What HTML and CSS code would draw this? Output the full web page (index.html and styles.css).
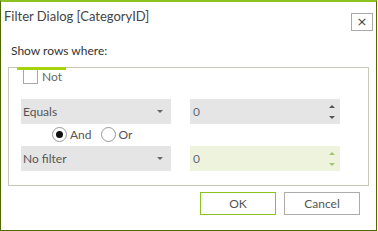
FILE: index.html
```html
<!DOCTYPE html>
<html lang="en">
<head>
  <meta charset="UTF-8">
  <title>Filter Dialog</title>
  <link rel="stylesheet" href="styles.css">
</head>
<body>
  <div class="dialog">
    <div class="titlebar">
      <span class="title">Filter Dialog [CategoryID]</span>
      <button type="button" class="close">&times;</button>
    </div>

    <div class="body">
      <div class="caption">Show rows where:</div>

      <div class="group">
        <span class="group-tab"></span>

        <!-- Not -->
        <label class="check"><span class="box"></span>Not</label>

        <!-- Filter 1 -->
        <div class="row">
          <div class="select">Equals<span class="arrow"></span></div>
          <div class="spin">0
            <span class="spin-btns"><i class="up"></i><i class="down"></i></span>
          </div>
        </div>

        <!-- And / Or -->
        <div class="logic">
          <label class="radio"><span class="dot checked"></span>And</label>
          <label class="radio"><span class="dot"></span>Or</label>
        </div>

        <!-- Filter 2 -->
        <div class="row">
          <div class="select">No filter<span class="arrow"></span></div>
          <div class="spin disabled">0
            <span class="spin-btns"><i class="up"></i><i class="down"></i></span>
          </div>
        </div>
      </div>

      <div class="actions">
        <button type="button" class="btn btn-ok">OK</button>
        <button type="button" class="btn">Cancel</button>
      </div>
    </div>
  </div>
</body>
</html>
```

FILE: styles.css
```css
* {
  box-sizing: border-box;
}

body {
  margin: 0;
  font-family: Lato, "Liberation Sans", Arial, sans-serif;
  font-size: 12px;
  color: #555;
  background-color: #fff;
}

.dialog {
  width: 377px;
  height: 231px;
  background-color: #fff;
  border: 1px solid #4d6b02;
  border-top: 2px solid #8cc21f;
}

.titlebar {
  display: flex;
  justify-content: space-between;
  align-items: flex-start;
  height: 34px;
}

.title {
  padding: 6px 0 0 3px;
  font-size: 13px;
  line-height: 16px;
  color: #444;
}

.close {
  width: 22px;
  height: 18px;
  margin: 11px 3px 0 0;
  padding: 0;
  border: 1px solid #a9a9a9;
  background-color: #fff;
  font-family: "DejaVu Sans", sans-serif;
  font-size: 13px;
  line-height: 14px;
  color: #444;
}

.body {
  padding: 0 7px;
}

.caption {
  margin-top: 7px;
  padding-left: 3px;
  line-height: 15px;
  color: #333;
}

.group {
  position: relative;
  height: 119px;
  margin-top: 9px;
  padding: 0 0 0 12px;
  border: 1px solid #c8c8b9;
}

.group-tab {
  position: absolute;
  left: 8px;
  top: -1px;
  width: 49px;
  height: 3px;
  background-color: #a5d40f;
}

.check {
  display: flex;
  align-items: center;
  height: 15px;
  margin: 1px 0 0 2px;
  color: #666;
}

.check .box {
  width: 15px;
  height: 15px;
  margin-right: 4px;
  border: 1px solid #a8a8a8;
  background-color: #fff;
}

.row {
  display: flex;
  margin-top: 15px;
}

.row + .logic + .row {
  margin-top: 4px;
}

.select,
.spin {
  display: flex;
  align-items: center;
  width: 150px;
  height: 25px;
  background-color: #e5e5e5;
}

.select {
  justify-content: space-between;
  padding: 0 8px 0 2px;
}

.arrow {
  border-left: 3px solid transparent;
  border-right: 3px solid transparent;
  border-top: 3px solid #666;
}

.spin {
  justify-content: space-between;
  margin-left: 19px;
  padding: 0 5px 0 3px;
  color: #5f6b7c;
}

.spin-btns {
  display: flex;
  flex-direction: column;
  gap: 8px;
}

.spin-btns i {
  display: block;
  border-left: 3px solid transparent;
  border-right: 3px solid transparent;
}

.spin-btns .up {
  border-bottom: 3px solid #555;
}

.spin-btns .down {
  border-top: 3px solid #555;
}

.spin.disabled {
  background-color: #eef3de;
}

.spin.disabled .up {
  border-bottom-color: #a8c46a;
}

.spin.disabled .down {
  border-top-color: #a8c46a;
}

.logic {
  display: flex;
  gap: 9px;
  height: 15px;
  margin: 3px 0 0 31px;
}

.radio {
  display: flex;
  align-items: center;
  gap: 3px;
}

.dot {
  display: flex;
  align-items: center;
  justify-content: center;
  width: 15px;
  height: 15px;
  border: 1px solid #999;
  border-radius: 50%;
  background-color: #fff;
}

.dot.checked::after {
  content: "";
  width: 7px;
  height: 7px;
  border-radius: 50%;
  background-color: #111;
}

.actions {
  display: flex;
  justify-content: flex-end;
  gap: 8px;
  margin-top: 6px;
  padding-right: 9px;
}

.btn {
  width: 76px;
  height: 23px;
  padding: 0;
  border: 1px solid #acacac;
  background-color: #fff;
  font-family: inherit;
  font-size: 12px;
  color: #555;
}

.btn-ok {
  border-color: #8cc21f;
}
```
